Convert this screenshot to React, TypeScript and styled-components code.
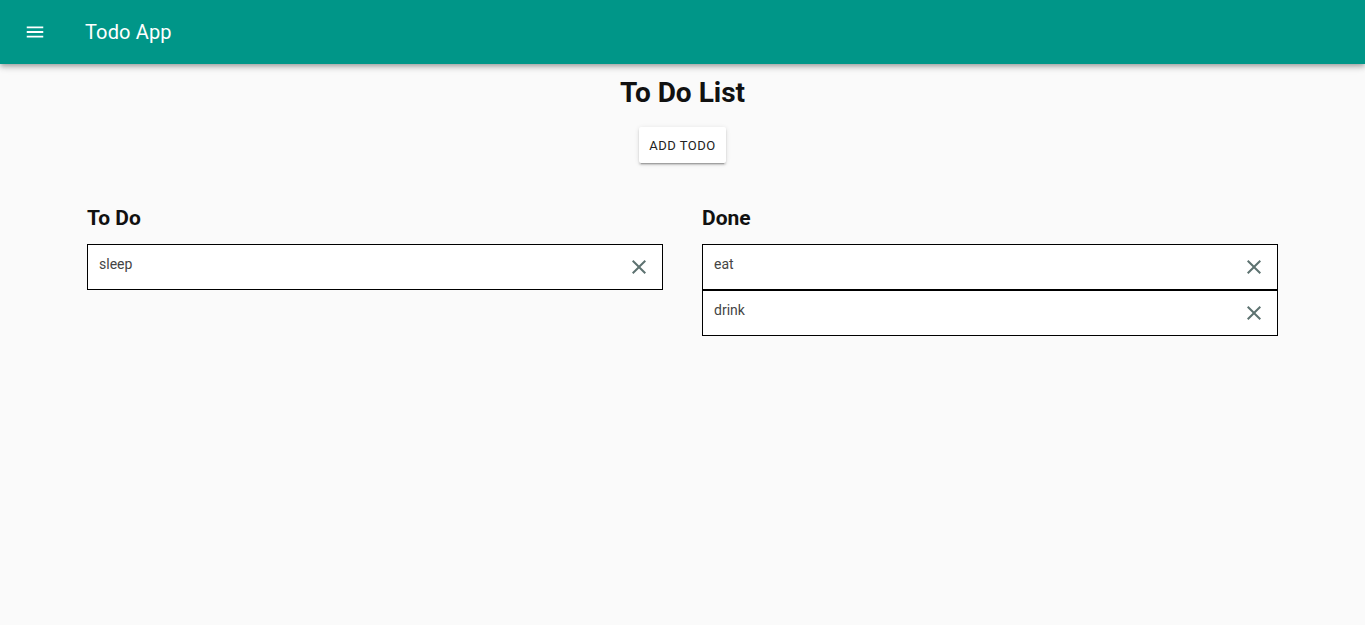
import styled, { createGlobalStyle } from 'styled-components';

const GlobalStyle = createGlobalStyle`
  body {
    margin: 0;
    background: #fafafa;
    font-family: Roboto, "Liberation Sans", Arial, sans-serif;
    color: rgba(0, 0, 0, 0.87);
  }
`;

const AppBar = styled.header`
  height: 64px;
  background: #009688;
  color: #fff;
  display: flex;
  align-items: center;
  padding: 0 24px;
  box-shadow: 0 2px 4px -1px rgba(0,0,0,0.2), 0 4px 5px 0 rgba(0,0,0,0.14), 0 1px 10px 0 rgba(0,0,0,0.12);
`;

const MenuButton = styled.button`
  background: none;
  border: 0;
  padding: 0;
  width: 22px;
  height: 22px;
  color: #fff;
  display: flex;
  align-items: center;
  justify-content: center;
  margin-right: 39px;
`;

const Title = styled.h1`
  margin: 0;
  font-size: 20px;
  font-weight: 400;
  letter-spacing: 0.15px;
`;

const Main = styled.main`
  display: flex;
  flex-direction: column;
  align-items: center;
  padding-top: 13px;
`;

const Heading = styled.h2`
  margin: 0;
  font-size: 28px;
  font-weight: 700;
  line-height: 32px;
  color: #111;
`;

const AddButton = styled.button`
  margin-top: 18px;
  background: #fff;
  border: 0;
  border-radius: 2px;
  padding: 0 10px;
  height: 36px;
  font-family: inherit;
  font-size: 13px;
  font-weight: 400;
  letter-spacing: 0.5px;
  color: #222;
  text-transform: uppercase;
  box-shadow: 0 3px 1px -2px rgba(0,0,0,0.2), 0 2px 2px 0 rgba(0,0,0,0.14), 0 1px 5px 0 rgba(0,0,0,0.12);
`;

const Columns = styled.div`
  display: grid;
  grid-template-columns: 576px 576px;
  gap: 39px;
  margin-top: 43px;
`;

const ColumnTitle = styled.h3`
  margin: 0 0 14px;
  font-size: 21px;
  font-weight: 700;
  line-height: 24px;
  color: #111;
`;

const List = styled.div`
  display: flex;
  flex-direction: column;
`;

const Item = styled.div`
  height: 46px;
  box-sizing: border-box;
  border: 1px solid #000;
  background: #fff;
  display: flex;
  align-items: center;
  padding: 0 11px;
`;

const ItemText = styled.span`
  flex: 1;
  font-size: 14px;
  color: #444;
  margin-top: -6px;
`;

const CloseButton = styled.button`
  background: none;
  border: 0;
  padding: 0;
  width: 24px;
  height: 24px;
  display: flex;
  align-items: center;
  justify-content: center;
  color: #5d7270;
`;

const MenuIcon = () => (
  <svg width="22" height="22" viewBox="0 0 24 24" fill="currentColor">
    <path d="M3 18h18v-2H3v2zm0-5h18v-2H3v2zm0-7v2h18V6H3z" />
  </svg>
);

const CloseIcon = () => (
  <svg width="24" height="24" viewBox="0 0 24 24" fill="currentColor">
    <path d="M19 6.41 17.59 5 12 10.59 6.41 5 5 6.41 10.59 12 5 17.59 6.41 19 12 13.41 17.59 19 19 17.59 13.41 12z" />
  </svg>
);

const todo = ['sleep'];
const done = ['eat', 'drink'];

const Column = ({ title, items }: { title: string; items: string[] }) => (
  <section>
    <ColumnTitle>{title}</ColumnTitle>
    <List>
      {items.map(item => (
        <Item key={item}>
          <ItemText>{item}</ItemText>
          <CloseButton aria-label="delete"><CloseIcon /></CloseButton>
        </Item>
      ))}
    </List>
  </section>
);

export default function App() {
  return (
    <>
      <GlobalStyle />
      <AppBar>
        <MenuButton aria-label="menu"><MenuIcon /></MenuButton>
        <Title>Todo App</Title>
      </AppBar>
      <Main>
        <Heading>To Do List</Heading>
        <AddButton>Add Todo</AddButton>
        <Columns>
          <Column title="To Do" items={todo} />
          <Column title="Done" items={done} />
        </Columns>
      </Main>
    </>
  );
}
